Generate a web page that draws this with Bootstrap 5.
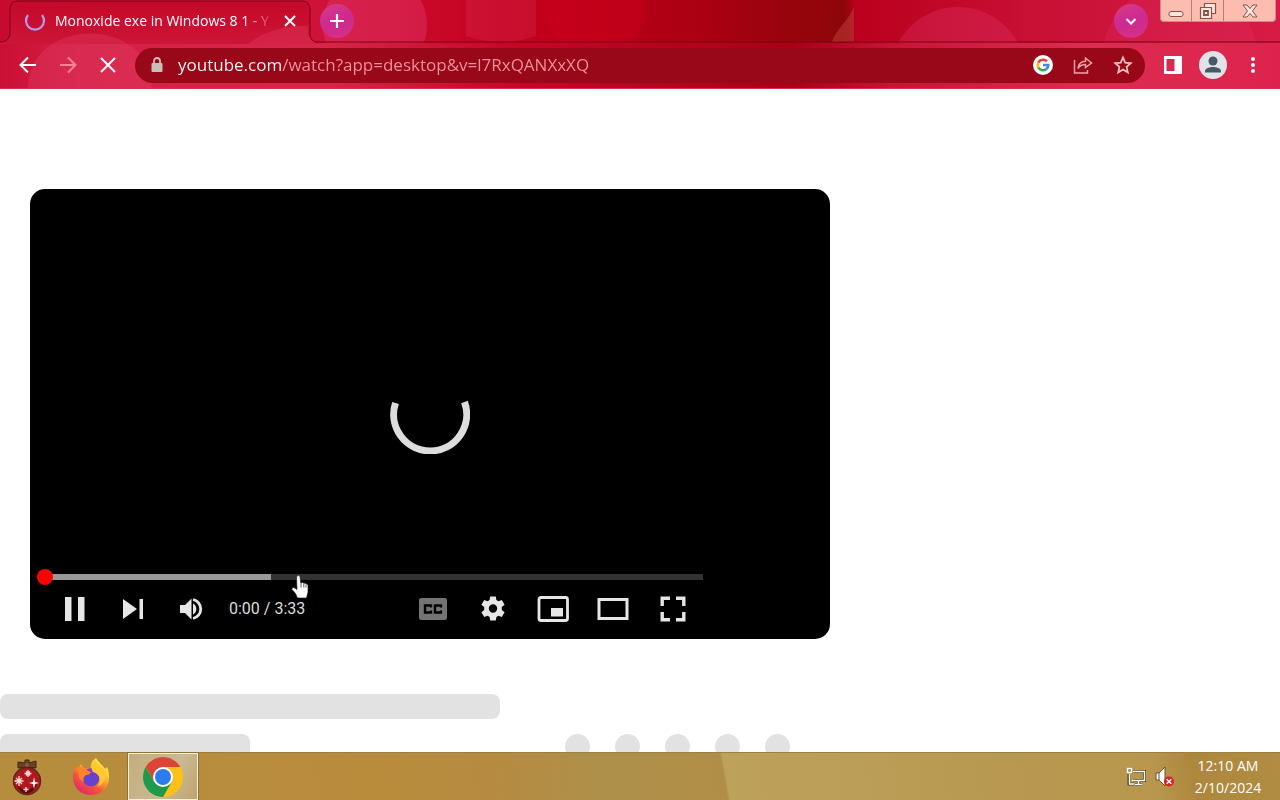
<!DOCTYPE html>
<html lang="en">
<head>
<meta charset="utf-8">
<meta name="viewport" content="width=device-width, initial-scale=1">
<title>Monoxide exe in Windows 8 1 - YouTube</title>
<link href="https://cdn.jsdelivr.net/npm/bootstrap@5.3.0/dist/css/bootstrap.min.css" rel="stylesheet">
<style>
  body { font-family: "Open Sans", "Noto Sans", sans-serif; background: #fff; }
  button { padding: 0; border: 0; background: none; color: inherit; display: flex; align-items: center; justify-content: center; flex: none; }
  svg { display: block; }
  .browser { background: #c80a2c; color: #fff; border-bottom: 1px solid #d9304f; overflow: hidden; }
  .bokeh { inset: 0; z-index: 0; }
  .tab-row { height: 42px; z-index: 1; }
  .tab { width: 300px; margin-left: 10px; padding: 0 10px 0 14px; }
  .tab-title { font-size: 14px; line-height: 20px; margin-left: 9px; width: 226px; white-space: nowrap;
    -webkit-mask-image: linear-gradient(90deg, #000 188px, transparent 220px); mask-image: linear-gradient(90deg, #000 188px, transparent 220px); }
  .orb { width: 34px; height: 34px; border-radius: 50%; background: linear-gradient(160deg, #d93a86, #cc2a90 50%, #d93088); }
  .new-tab { margin-left: 10px; }
  .win-controls { height: 22px; background: #fcbcb0; border: 1px solid #d98783; border-top: 0; border-radius: 0 0 4px 4px; margin-right: 4px; color: #81544c; }
  .win-controls button { height: 21px; width: 30px; }
  .win-controls button + button { border-left: 1px solid #c07a74; width: 32px; }
  .win-controls button:last-child { width: 52px; }
  .toolbar { height: 46px; z-index: 1; padding-left: 8px; padding-right: 7px; }
  .tool { width: 40px; height: 34px; }
  .omnibox { height: 35px; border-radius: 18px; background: #980818; margin-left: 7px; padding-left: 14px; padding-right: 2px; }
  .url { font-size: 17px; line-height: 24px; border: 0; outline: 0; margin-left: 13px; padding: 0; min-width: 0;
    color: transparent; background: linear-gradient(90deg, #fff 104px, #f5929f 104px); -webkit-background-clip: text; background-clip: text; }
  .page { padding-top: 100px; }
  .player { width: 62.5%; aspect-ratio: 16 / 9; margin-left: 30px; background: #000; border-radius: 15px; color: #e6e6e6; }
  .chrome-bottom { left: 0; right: 0; bottom: 0; padding: 0 127px 10px 7px; }
  .seek { -webkit-appearance: none; appearance: none; display: block; width: 100%; height: 16px; margin: 0; background: none; }
  .seek::-webkit-slider-runnable-track { height: 6px; background: linear-gradient(90deg, transparent 8px, #999 8px, #999 234px, #333 234px); }
  .seek::-webkit-slider-thumb { -webkit-appearance: none; width: 16px; height: 16px; margin-top: -5px; border-radius: 50%; background: #f00; }
  .controls { height: 40px; margin-top: 4px; padding-left: 9px; }
  .controls button { width: 58px; height: 40px; }
  .controls .settings button { width: 60px; }
  .time { font-family: Roboto, sans-serif; font-size: 16px; line-height: 24px; margin-left: 9px; color: #ddd; }
  .pointer { left: 261px; bottom: 39px; }
  .bone { background: #e2e2e2; border-radius: 8px; height: 25px; }
  .bone-title { width: 500px; margin: 55px 0 15px; }
  .bone-sub { width: 250px; }
  .bone-actions { gap: 25px; margin-left: 315px; }
  .bone-dot { width: 25px; border-radius: 50%; }
  .taskbar { height: 48px; color: #fff; border-top: 1px solid #9a8142;
    background: linear-gradient(80deg, #b58d3d 0, #b98c3c 30%, #b58b42 40%, #ae904a 47%, #b18e47 56.5%, #bda25c 56.7%, #b99a53 75%, #b8964d 90%, #ad873c 93%, #b08d43 100%); }
  .task { width: 74px; height: 47px; }
  .task-first { width: 54px; }
  .task-active { width: 70px; background: linear-gradient(120deg, #c4ad7b, #cab995 60%, #bea46b); border: 1px solid #f5efdb; outline: 1px solid #8d7338; outline-offset: 0; }
  .clock { font-size: 14px; line-height: 22px; width: 104px; padding-top: 1px; }
</style>
<script src="https://cdn.jsdelivr.net/npm/bootstrap@5.3.0/dist/js/bootstrap.bundle.min.js"></script>
</head>
<body>
<div class="d-flex flex-column vh-100 overflow-hidden">

  <header class="browser position-relative flex-shrink-0">
    <svg class="bokeh position-absolute w-100 h-100" aria-hidden="true">
      <defs>
        <linearGradient id="base" x2="1280" gradientUnits="userSpaceOnUse">
          <stop stop-color="#c80a30"/><stop offset=".25" stop-color="#cf1238"/><stop offset=".4" stop-color="#c4001c"/>
          <stop offset=".55" stop-color="#aa0012"/><stop offset=".66" stop-color="#8d0609"/><stop offset=".668" stop-color="#ba001c"/>
          <stop offset=".8" stop-color="#c80f34"/><stop offset="1" stop-color="#d61c45"/>
        </linearGradient>
        <linearGradient id="lower" x2="1280" gradientUnits="userSpaceOnUse">
          <stop stop-color="#cb0f34"/><stop offset=".06" stop-color="#d31f45"/><stop offset=".25" stop-color="#d82649"/><stop offset=".4" stop-color="#c90528"/>
          <stop offset=".62" stop-color="#aa0016"/><stop offset=".7" stop-color="#ca1436"/><stop offset=".85" stop-color="#dc2c4f"/><stop offset="1" stop-color="#dd234d"/>
        </linearGradient>
        <linearGradient id="tabfill" x2="0" y2="1"><stop stop-color="#c50829"/><stop offset="1" stop-color="#cc1538"/></linearGradient>
      </defs>
      <rect width="100%" height="43" fill="url(#base)"/>
      <g fill="#e8447a" fill-opacity=".34">
        <circle cx="375" cy="25" r="52"/><path d="M466 0H536V36Q502 48 466 36Z" fill-opacity=".2"/>
        <circle cx="958" cy="75" r="68" fill-opacity=".25"/><circle cx="1180" cy="60" r="78" fill-opacity=".16"/>
      </g>
      <path d="M544 0H646Q646 30 628 42H562Q544 30 544 0Z" fill="#d0001c" fill-opacity=".4"/>
      <path d="M832 42C836 28 850 20 854 6V42Z" fill="#b73a32" fill-opacity=".6"/>
      <rect y="43" width="100%" height="46" fill="url(#lower)"/>
      <path d="M0 42C7 42 10 38 10 32V9Q10 1 18 1H302Q310 1 310 9V34Q310 42 318 42V44H0Z" fill="url(#tabfill)"/>
      <g fill="#e8446c" fill-opacity=".3"><path d="M28 89C28 15 152 15 152 89Z"/><path d="M248 44Q275 24 308 26V36L316 44Z"/></g>
      <path d="M0 42C7 42 10 38 10 32V9Q10 1 18 1H302Q310 1 310 9V34Q310 42 318 42H5000" fill="none" stroke="#7d0517"/>
    </svg>

    <div class="tab-row position-relative d-flex align-items-center">
      <div class="tab d-flex align-items-center">
        <svg width="22" height="22" viewBox="0 0 22 22" fill="none" stroke="#b39be8" stroke-width="2.2"><path d="M4 5A9 9 0 1 0 18 5"/></svg>
        <span class="tab-title">Monoxide exe in Windows 8 1 - Y</span>
        <button aria-label="Close tab"><svg width="18" height="18" viewBox="0 0 18 18" stroke="#fff" stroke-width="2"><path d="M4 4l10 10M14 4L4 14"/></svg></button>
      </div>
      <button class="orb new-tab me-auto" aria-label="New tab"><svg width="18" height="18" viewBox="0 0 18 18" stroke="#fff" stroke-width="2.2"><path d="M9 2v14M2 9h14"/></svg></button>
      <button class="orb me-2" aria-label="Search tabs"><svg width="14" height="14" viewBox="0 0 14 14" fill="none" stroke="#fff" stroke-width="2"><path d="M2.5 5L7 9.5L11.5 5"/></svg></button>
      <div class="win-controls d-flex align-self-start ms-1">
        <button aria-label="Minimize"><svg width="18" height="20" viewBox="0 0 18 20"><rect x="2" y="10.500" width="14" height="5" rx="2" fill="#ffe5dd" stroke="currentColor"/></svg></button>
        <button aria-label="Restore"><svg width="20" height="20" viewBox="0 0 20 20" fill="#ffe5dd" stroke="currentColor" stroke-width="1.200"><path d="M6.500 2.500h11v10h-11z"/><path d="M2.500 6.500h11v11h-11z"/><path d="M6 10h4v4H6z" stroke-width="1.800"/></svg></button>
        <button aria-label="Close"><svg width="18" height="20" viewBox="0 0 18 20"><path d="M2 4h4l3 3.500L12 4h4l-4.500 6L16 16h-4l-3-3.500L6 16H2l4.500-6z" fill="#ffe5dd" stroke="currentColor"/></svg></button>
      </div>
    </div>

    <div class="toolbar position-relative d-flex align-items-center">
      <button class="tool" aria-label="Back"><svg width="20" height="20" viewBox="0 0 20 20" fill="none" stroke="#fff" stroke-width="2"><path d="M18 10H3M10 2.500L2.500 10L10 17.500"/></svg></button>
      <button class="tool" aria-label="Forward"><svg width="20" height="20" viewBox="0 0 20 20" fill="none" stroke="#f48496" stroke-width="2"><path d="M2 10h15M10 2.500L17.500 10L10 17.500"/></svg></button>
      <button class="tool" aria-label="Stop"><svg width="20" height="20" viewBox="0 0 20 20" stroke="#fff" stroke-width="2"><path d="M3 3l14 14M17 3L3 17"/></svg></button>
      <div class="omnibox d-flex align-items-center flex-grow-1">
        <svg width="16" height="18" viewBox="0 0 16 18"><path d="M5 8V5a3 3 0 0 1 6 0v3" fill="none" stroke="#c9bfb8" stroke-width="1.800"/><rect x="2.500" y="7" width="11" height="9" rx="1" fill="#c9bfb8"/></svg>
        <input class="url flex-grow-1" type="text" aria-label="Address" value="youtube.com/watch?app=desktop&amp;v=l7RxQANXxXQ">
        <button class="tool" aria-label="Google"><svg width="20" height="20" viewBox="0 0 20 20" fill="none" stroke-width="2.600"><circle cx="10" cy="10" r="10" fill="#fff"/><path d="M13.900 6.400A5.300 5.300 0 0 0 5.300 7.600" stroke="#ea4335"/><path d="M5.300 7.600A5.300 5.300 0 0 0 5.300 12.500" stroke="#fbbc05"/><path d="M5.300 12.500A5.300 5.300 0 0 0 13.400 14" stroke="#34a853"/><path d="M13.400 14A5.300 5.300 0 0 0 15.300 10H10" stroke="#4285f4"/></svg></button>
        <button class="tool" aria-label="Share"><svg width="20" height="20" viewBox="0 0 20 20" fill="none" stroke="#f3a0a7" stroke-width="1.500"><path d="M1.500 5v13h13V15"/><path d="M5 13.500C5.500 8.500 8 6.500 12.500 6.300V3L18.500 8L12.500 12.500V9.500C9 9.500 6.800 10.500 5 13.500Z"/></svg></button>
        <button class="tool" aria-label="Bookmark"><svg width="20" height="20" viewBox="0 0 20 20" fill="none" stroke="#ffc5c2" stroke-width="1.700"><path d="M10 2.500l2.200 5.200 5.600.5-4.200 3.700 1.200 5.500L10 14.500l-4.800 2.900 1.200-5.500L2.200 8.200l5.600-.5z"/></svg></button>
      </div>
      <button class="tool ms-2" aria-label="Side panel"><svg width="18" height="18" viewBox="0 0 18 18"><path d="M0 0h18v18H0zM2.500 3v12h8V3z" fill="#fff" fill-rule="evenodd"/></svg></button>
      <button class="tool" aria-label="Profile"><svg width="28" height="28" viewBox="0 0 28 28"><circle cx="14" cy="14" r="14" fill="#e1e3e8"/><g fill="#475867"><circle cx="14" cy="10" r="4.500"/><path d="M6 21.500V20c0-2.700 5-4 8-4s8 1.300 8 4v1.500z"/></g></svg></button>
      <button class="tool" aria-label="Menu"><svg width="6" height="20" viewBox="0 0 6 20" fill="#fff"><circle cx="3" cy="4" r="2"/><circle cx="3" cy="10" r="2"/><circle cx="3" cy="16" r="2"/></svg></button>
    </div>
  </header>

  <main class="page flex-grow-1 overflow-hidden">
    <section class="player position-relative d-flex align-items-center justify-content-center" aria-label="Video player">
      <svg width="80" height="80" viewBox="0 0 80 80" fill="none" stroke="#ddd" stroke-width="7"><path d="M5.500 29A36.500 36.500 0 1 0 74.500 28"/></svg>
      <div class="chrome-bottom position-absolute">
        <input class="seek" type="range" aria-label="Seek" min="0" max="213" value="0">
        <div class="controls d-flex align-items-center">
          <button aria-label="Pause"><svg width="20" height="24" fill="currentColor"><path d="M0 0h6.500v24H0zM13 0h6.500v24H13z"/></svg></button>
          <button aria-label="Next"><svg width="22" height="22" fill="currentColor"><path d="M1 1l14 10L1 21zM17.500 1H21v20h-3.500z"/></svg></button>
          <button aria-label="Mute"><svg width="24" height="24" viewBox="0 0 24 24" fill="currentColor"><path d="M1 8h5l6.500-6.500v21L6 16H1zM14 6.500a6.200 6.200 0 0 1 0 11z"/><path d="M14 2.500a9.700 9.700 0 0 1 0 19" fill="none" stroke="currentColor" stroke-width="2.800"/></svg></button>
          <span class="time">0:00 / 3:33</span>
          <div class="settings d-flex ms-auto">
            <button aria-label="Subtitles"><svg width="28" height="22" viewBox="0 0 28 22"><rect width="28" height="22" rx="2.500" fill="#747474"/><path d="M12 9.500V7.500H6v7h6v-2M22 9.500V7.500h-6v7h6v-2" fill="none" stroke="#000" stroke-width="2.400"/></svg></button>
            <button aria-label="Settings"><svg width="26" height="26" viewBox="0 0 26 26"><path d="M10.200 0.500h5.600l.6 3.600 2 1.100 3.400-1.300 2.800 4.900-2.800 2.300v2.800l2.800 2.300-2.800 4.900-3.400-1.300-2 1.100-.6 3.600h-5.600l-.6-3.600-2-1.100-3.400 1.300-2.800-4.900 2.800-2.300v-2.800L1.400 8.800l2.800-4.900 3.400 1.300 2-1.100zM13 8.300a4.200 4.200 0 1 0 0 8.400A4.200 4.200 0 0 0 13 8.300z" fill="currentColor" fill-rule="evenodd"/></svg></button>
            <button aria-label="Miniplayer"><svg width="32" height="26" viewBox="0 0 32 26"><rect x="2" y="1.500" width="28.500" height="23" rx="2" fill="none" stroke="currentColor" stroke-width="2.800"/><path d="M14 12h12v8.500H14z" fill="currentColor"/></svg></button>
            <button aria-label="Theater mode"><svg width="32" height="22" viewBox="0 0 32 22"><rect x="2" y="1.500" width="28" height="19" fill="none" stroke="currentColor" stroke-width="3"/></svg></button>
            <button aria-label="Full screen"><svg width="26" height="26" viewBox="0 0 26 26" fill="none" stroke="currentColor" stroke-width="3.400"><path d="M2.200 10V2.200H10M16 2.200h7.800V10M23.800 16v7.800H16M10 23.800H2.200V16"/></svg></button>
          </div>
        </div>
      </div>
      <svg class="pointer position-absolute" width="18" height="26" viewBox="0 0 18 26"><path d="M6 2q2-1.500 3 .5l.8 6.500 1-.5q1.500-.3 2 .8 1.700-.7 2.300.7 1.900-.4 1.900 1.500v6.500L15.500 24h-9L4.500 19.500 1 15.500Q.5 13 3 13.500l3 2L5.500 3z" fill="#fff" stroke="#222" stroke-width=".7"/><path d="M10 9v4.500M12.800 9.500v4M15 10.500v3" stroke="#333" stroke-width=".8"/></svg>
    </section>
    <div class="bone bone-title"></div>
    <div class="d-flex">
      <div class="bone bone-sub"></div>
      <div class="bone-actions d-flex">
        <div class="bone bone-dot"></div><div class="bone bone-dot"></div><div class="bone bone-dot"></div><div class="bone bone-dot"></div><div class="bone bone-dot"></div>
      </div>
    </div>
  </main>

  <footer class="taskbar d-flex align-items-center flex-shrink-0">
    <button class="task task-first" aria-label="Start"><svg width="32" height="40" viewBox="0 0 32 40"><circle cx="16" cy="24" r="13.500" fill="#b01820" stroke="#5a2a1c" stroke-width="1.500"/><path d="M6 28q9 10 20-1-3 9-10 9.500T6 28z" fill="#5d0b0e"/><path d="M16 10L7 11V5l7 1V3h4v3l7-2v7z" fill="#62442d" stroke="#442513"/><circle cx="16" cy="8" r="2" fill="#a65036"/><g stroke="#ffd9d2" stroke-width="1.300"><path d="M8 19v10M3.500 24h9M5 21l6 6M11 21l-6 6M17 13v7M13.500 16.500h7M15 14.500l4 4M19 14.500l-4 4M15 30v5M12.500 32.500h5"/></g><path d="M23 20l1 5 4 1-4 1-1 5-1-5-4-1 4-1z" fill="#fff"/></svg></button>
    <button class="task" aria-label="Firefox"><svg width="40" height="40" viewBox="0 0 40 40">
      <defs><linearGradient id="fox" x1=".85" y1=".1" x2=".25" y2="1"><stop stop-color="#fff04a"/><stop offset=".35" stop-color="#ffb52b"/><stop offset=".65" stop-color="#fb5538"/><stop offset="1" stop-color="#df2470"/></linearGradient></defs>
      <path d="M25 1c2 4 8 8 9 11l2-2c2 4 2 8 2 11 0 10-8 17-18 17S2 31 2 20c0-5 2-8 5-11v3l3-5q1 3 4 5 2-1 6 0c-1-5 1-8 5-11z" fill="url(#fox)"/>
      <circle cx="20" cy="21" r="8.500" fill="#6642cf"/><path d="M15 13c3-3 9-2 12 2l-4 1q-3-3-8-3z" fill="#a33ac8"/><path d="M7 11q4-3 8 2l5 2q-1 3-5 3-4 3-2 7-7-2-6-14z" fill="#ff8427"/><path d="M22 15c7 2 9 9 4 15 8-3 11-12 6-19-3-2-7-4-8-8-4 5-4 9-2 12z" fill="#ffc633"/></svg></button>
    <button class="task task-active" aria-label="Chrome"><svg width="40" height="40" viewBox="0 0 40 40"><circle cx="20" cy="20" r="20" fill="#fbc116"/><path d="M2.700 10A20 20 0 0 1 37.300 10H20L11.300 25z" fill="#db4437"/><path d="M2.700 10A20 20 0 0 0 20 40L28.700 25 11.300 25z" fill="#1e9a4c"/><circle cx="20" cy="20" r="10" fill="#fff"/><circle cx="20" cy="20" r="8" fill="#2e7cec"/></svg></button>
    <div class="d-flex align-items-center ms-auto">
      <button class="me-2" aria-label="Network"><svg width="20" height="20" viewBox="0 0 20 20" fill="none"><g stroke="#5a4420" stroke-width="3"><path d="M7 4.500h11.500v9H7M3 7v10h5M12.500 13.500v4M9 17.500h7"/></g><g stroke="#fff" stroke-width="1.400"><path d="M7 4.500h11.500v9H6M3.500 7v10H8M12.500 13.500v4M9 17.500h7"/><rect x="1.500" y="1.500" width="4" height="4" fill="#9f8450"/></g></svg></button>
      <button aria-label="Volume muted"><svg width="22" height="22" viewBox="0 0 22 22"><path d="M2 7h3l6-6v19l-6-6H2z" fill="#fff" stroke="#6b5229"/><path d="M5 7v7" stroke="#6b5229"/><circle cx="15" cy="15.500" r="5" fill="#d8222b"/><path d="M12.700 13.200l4.600 4.600M17.300 13.200l-4.600 4.600" stroke="#fff" stroke-width="1.500"/></svg></button>
      <time class="clock text-center" datetime="2024-02-10T00:10">12:10 AM<br>2/10/2024</time>
    </div>
  </footer>
</div>
</body>
</html>
